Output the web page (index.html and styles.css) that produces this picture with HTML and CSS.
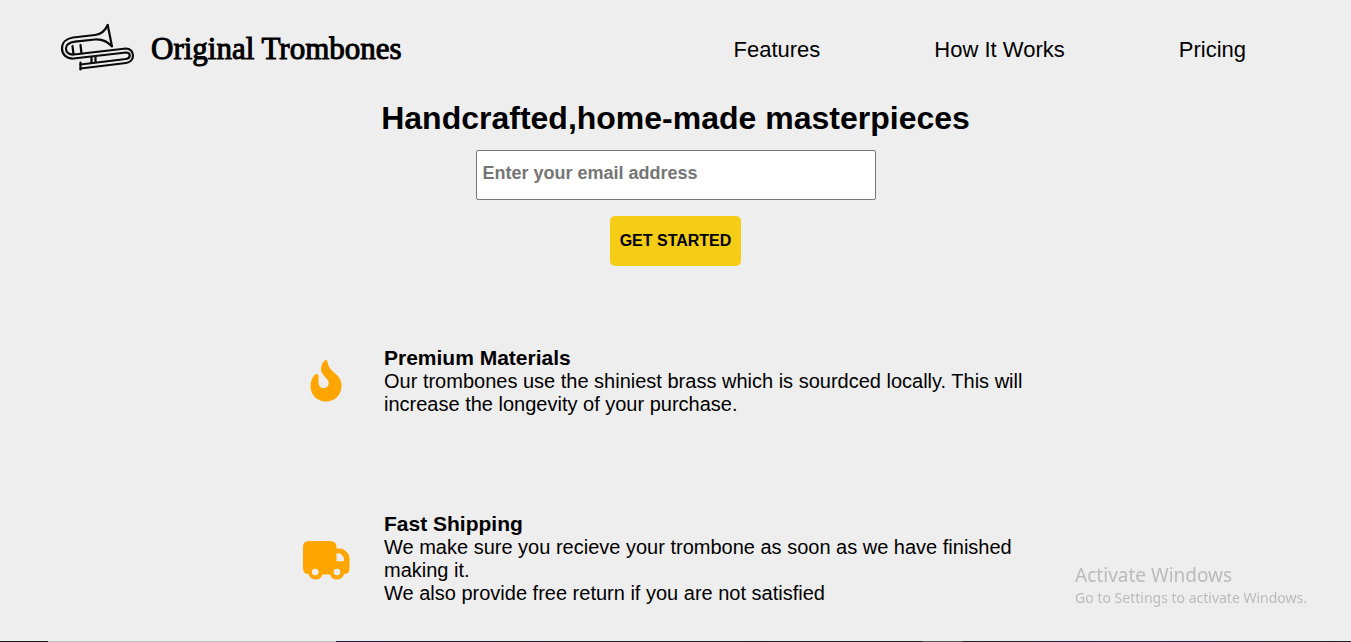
FILE: index.html
```html
<!DOCTYPE html>
<html lang="en">
<head>
<meta charset="utf-8">
<meta name="viewport" content="width=device-width, initial-scale=1">
<title>Original Trombones</title>
<link rel="stylesheet" href="styles.css">
</head>
<body>
<header class="header">
  <a class="logo" href="#">
    <svg class="logo-mark" viewBox="0 0 76 50" aria-hidden="true">
      <g fill="none" stroke="#0a0a0a" stroke-width="2.200" stroke-linejoin="round" stroke-linecap="round">
        <path d="M47.700 3C45 9 41 12.500 35 13L13 15.500C6 16.500 2 21 2 26.500C2 32.500 6.500 37 13.500 36.500L66 30.500C71 30.500 71 36.500 66 37L20.500 42.500"/>
        <path d="M47.700 3L52 24.500C47 19 42 17 35 17.500L15 19.700C9 20.500 6 23 6 26.500C6 30.500 9 33 14 32.500L66 26.500C70 26.500 73 29.500 73 33.500C73 37.500 70 40.500 66 41L20.500 46.500"/>
        <path d="M12.500 24L13.500 32M20.500 23L21.500 31.500M20.500 40.500V47.500M31.500 35V40.500M35.500 34.500V40"/>
      </g>
    </svg>
    <span class="logo-text">Original Trombones</span>
  </a>
  <nav class="nav">
    <a href="#features">Features</a>
    <a href="#how-it-works">How It Works</a>
    <a href="#pricing">Pricing</a>
  </nav>
</header>
<main>
  <section class="hero">
    <h1>Handcrafted,home-made masterpieces</h1>
    <form class="signup">
      <input class="email" type="email" placeholder="Enter your email address" aria-label="Email address">
      <button class="submit" type="submit">GET STARTED</button>
    </form>
  </section>
  <section class="features" id="features">
    <article class="feature">
      <svg class="fire" viewBox="0 0 32 42" aria-hidden="true">
        <path fill="orange" d="M15.500 0Q17.500 0 17.500 2C18 6.500 20.500 9.500 24 12.500C29 16.500 31.500 20 31.500 25.500C31.500 35 25 41.500 16 41.500C7 41.500 0.500 35 0.500 26C0.500 21.500 2 17.500 5 14.500Q8 13 8.500 16V22.500C8.500 26 10.500 28 13.500 28C16.500 28 18.700 26 18.700 23C18.700 20 16.500 19 14.500 16.500C12 13.500 10.500 11 11 8C11.500 4.500 13 1.500 15.500 0Z"/>
      </svg>
      <div>
        <h2>Premium Materials</h2>
        <p>Our trombones use the shiniest brass which is sourdced locally. This will increase the longevity of your purchase.</p>
      </div>
    </article>
    <article class="feature">
      <svg class="truck" viewBox="0 0 47 39" aria-hidden="true">
        <path fill="orange" fill-rule="evenodd" d="M6 0H27Q33.500 0 33.500 6V7.500H37Q40 7.500 42 9.500L44.500 12Q46.500 14 46.500 17V28Q46.500 33 41 33A7.300 7.300 0 0 1 27 33.500H19.500A7.300 7.300 0 0 1 5.500 33Q0 33 0 27V6Q0 0 6 0ZM33.500 12.300V20.300H41V17.500Q39 12.500 36 12.300ZM12.200 27.800A3.300 3.300 0 1 0 12.200 34.400A3.300 3.300 0 1 0 12.200 27.800ZM34 27.800A3.300 3.300 0 1 0 34 34.400A3.300 3.300 0 1 0 34 27.800Z"/>
      </svg>
      <div>
        <h2>Fast Shipping</h2>
        <p>We make sure you recieve your trombone as soon as we have finished making it.<br>We also provide free return if you are not satisfied</p>
      </div>
    </article>
  </section>
</main>
<aside class="activation">
  <p class="activation-title">Activate Windows</p>
  <p class="activation-note">Go to Settings to activate Windows.</p>
</aside>
<div class="taskbar"></div>
</body>
</html>
```

FILE: styles.css
```css
* {
  box-sizing: border-box;
}

body {
  margin: 0;
  background: #eee;
  color: #000;
  font-family: "Liberation Sans", Arial, sans-serif;
}

h1, h2, p {
  margin: 0;
}

a {
  color: inherit;
  text-decoration: none;
}

.header {
  display: flex;
  align-items: center;
  justify-content: space-between;
  padding: 22px 105px 0 60px;
}

.logo {
  display: flex;
  align-items: flex-start;
  gap: 15px;
}

.logo-mark {
  width: 76px;
  height: 50px;
}

.logo-text {
  padding-top: 2px;
  font-family: "Liberation Serif", Georgia, serif;
  font-size: 31px;
  line-height: 50px;
  -webkit-text-stroke: 1px #000;
}

.nav {
  display: flex;
  gap: 114px;
  padding-top: 4px;
  font-size: 22px;
}

.hero {
  padding-top: 26px;
  text-align: center;
}

.hero h1 {
  font-size: 32px;
  line-height: 36px;
}

.signup {
  display: flex;
  flex-direction: column;
  align-items: center;
  gap: 16px;
  margin-top: 14px;
}

.email {
  width: 400px;
  height: 50px;
  padding: 0 6px 4px;
  border: 1px solid #767676;
  border-radius: 2px;
  background: #fff;
  font: bold 18px "Liberation Sans", Arial, sans-serif;
}

.email::placeholder {
  color: #757575;
}

.submit {
  height: 50px;
  padding: 0 10px;
  border: 0;
  border-radius: 5px;
  background: #f5cc16;
  color: #000;
  font: bold 16px "Liberation Sans", Arial, sans-serif;
}

.features {
  display: grid;
  gap: 96px;
  max-width: 751px;
  margin: 80px auto 0;
  padding-bottom: 37px;
}

.feature {
  display: grid;
  grid-template-columns: 52px 1fr;
  gap: 32px;
  align-items: center;
  font-size: 20px;
  line-height: 23px;
}

.feature h2 {
  font-size: 21px;
  line-height: 24px;
}

.fire,
.truck {
  justify-self: center;
}

.fire {
  width: 32px;
  height: 42px;
}

.truck {
  width: 47px;
  height: 39px;
  margin-top: 4px;
}

.activation {
  position: fixed;
  right: 44px;
  bottom: 34px;
  color: #bbb;
  font-family: "Noto Sans", sans-serif;
}

.activation-title {
  font-size: 19px;
  line-height: 26px;
}

.activation-note {
  font-size: 14px;
  line-height: 20px;
}

.taskbar {
  position: fixed;
  right: 0;
  bottom: 0;
  left: 0;
  height: 1px;
  background: linear-gradient(90deg, #1b1818 48px, #c0c0c0 48px 336px, #211a36 336px, #202020 922px, #555 922px 962px, #202020 962px, #23204a 1130px, #202020);
}
```
